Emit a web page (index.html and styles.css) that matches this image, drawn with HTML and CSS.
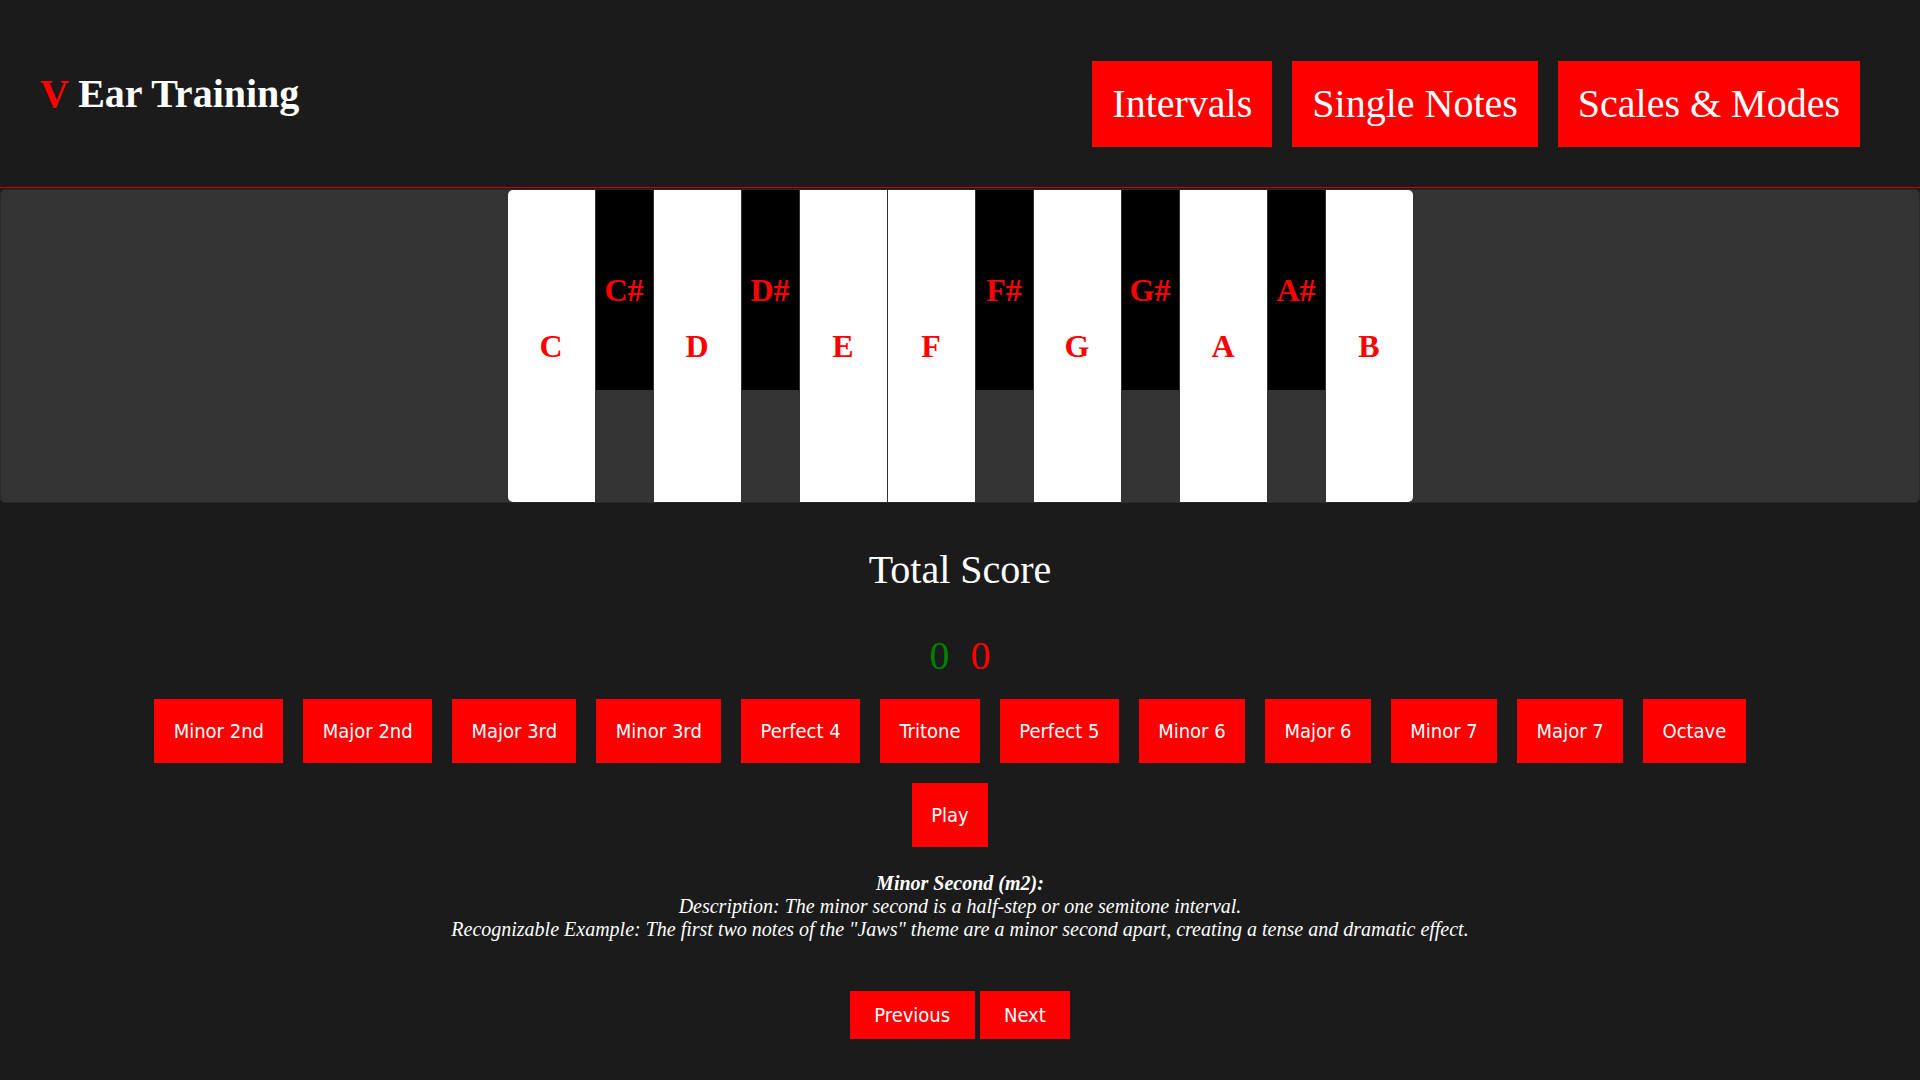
FILE: index.html
```html
<!DOCTYPE html>
<html lang="en">
<head>
<meta charset="utf-8">
<title>V Ear Training</title>
<link rel="stylesheet" href="styles.css">
</head>
<body>
<header class="topbar">
  <h1 class="logo"><span class="logo-v">V</span> Ear Training</h1>
  <nav class="nav">
    <a class="nav-btn" href="#">Intervals</a>
    <a class="nav-btn" href="#">Single Notes</a>
    <a class="nav-btn" href="#">Scales &amp; Modes</a>
  </nav>
</header>

<section class="piano-panel">
  <div class="keyboard">
    <div class="key white first"><span>C</span></div>
    <div class="key black"><span>C#</span></div>
    <div class="key white"><span>D</span></div>
    <div class="key black"><span>D#</span></div>
    <div class="key white"><span>E</span></div>
    <div class="key white"><span>F</span></div>
    <div class="key black"><span>F#</span></div>
    <div class="key white"><span>G</span></div>
    <div class="key black"><span>G#</span></div>
    <div class="key white"><span>A</span></div>
    <div class="key black"><span>A#</span></div>
    <div class="key white last"><span>B</span></div>
  </div>
</section>

<main class="trainer">
  <h2 class="score-title">Total Score</h2>
  <div class="score">
    <span class="score-correct">0</span>
    <span class="score-wrong">0</span>
  </div>

  <div class="interval-row">
    <button class="btn">Minor 2nd</button>
    <button class="btn">Major 2nd</button>
    <button class="btn">Major 3rd</button>
    <button class="btn">Minor 3rd</button>
    <button class="btn">Perfect 4</button>
    <button class="btn">Tritone</button>
    <button class="btn">Perfect 5</button>
    <button class="btn">Minor 6</button>
    <button class="btn">Major 6</button>
    <button class="btn">Minor 7</button>
    <button class="btn">Major 7</button>
    <button class="btn">Octave</button>
  </div>

  <div class="play-row">
    <button class="btn">Play</button>
  </div>

  <div class="description">
    <strong class="desc-title">Minor Second (m2):</strong>
    <span class="desc-line">Description: The minor second is a half-step or one semitone interval.</span>
    <span class="desc-line">Recognizable Example: The first two notes of the "Jaws" theme are a minor second apart, creating a tense and dramatic effect.</span>
  </div>

  <div class="pager">
    <button class="pager-btn">Previous</button>
    <button class="pager-btn">Next</button>
  </div>
</main>
</body>
</html>
```

FILE: styles.css
```css
* {
  box-sizing: border-box;
}

html, body {
  margin: 0;
  padding: 0;
  background: #1b1b1b;
  color: #ffffff;
  font-family: "Liberation Serif", "Times New Roman", serif;
}

body {
  width: 1920px;
  height: 1080px;
  overflow: hidden;
}

/* Header */
.topbar {
  height: 188px;
  display: flex;
  align-items: center;
  justify-content: space-between;
  padding: 0 60px 0 40px;
  border-bottom: 1px solid #d00000;
}

.logo {
  margin: 0;
  font-size: 40px;
  font-weight: bold;
  color: #ffffff;
  line-height: 46px;
}

.logo-v {
  color: #ff0000;
}

.nav {
  display: flex;
  gap: 20px;
  margin-top: 20px;
}

.nav-btn {
  display: block;
  background: #ff0000;
  color: #ffffff;
  text-decoration: none;
  font-size: 40px;
  line-height: 46px;
  padding: 20px;
}

/* Piano */
.piano-panel {
  margin-top: 1px;
  height: 314px;
  background: #333333;
  border: 1px solid #2a2a2a;
  border-radius: 5px;
  display: flex;
  justify-content: center;
}

.keyboard {
  display: flex;
  align-items: flex-start;
  height: 312px;
}

.key {
  display: flex;
  align-items: center;
  justify-content: center;
  color: #ff0000;
  font-weight: bold;
  font-size: 32px;
  border-right: 1px solid #333333;
}

.key.white {
  width: 88px;
  height: 312px;
  background: #ffffff;
}

.key.black {
  width: 58px;
  height: 200px;
  background: #000000;
}

.key.first {
  border-radius: 5px 0 0 5px;
}

.key.last {
  border-radius: 0 5px 5px 0;
  border-right: none;
  width: 87px;
}

/* Trainer */
.trainer {
  display: flex;
  flex-direction: column;
  align-items: center;
}

.score-title {
  margin: 44px 0 0;
  font-size: 40px;
  font-weight: normal;
  line-height: 46px;
}

.score {
  margin-top: 40px;
  display: flex;
  gap: 21px;
  font-size: 40px;
  line-height: 46px;
}

.score-correct {
  color: #008000;
}

.score-wrong {
  color: #ff0000;
}

.interval-row {
  margin-top: 20px;
  display: flex;
  justify-content: center;
  gap: 20px;
  padding-right: 20px;
}

.play-row {
  margin-top: 20px;
  display: flex;
  justify-content: center;
  padding-right: 20px;
}

.btn,
.pager-btn {
  background: #ff0000;
  color: #ffffff;
  border: none;
  border-radius: 0;
  font-family: "DejaVu Sans Condensed", "DejaVu Sans", sans-serif;
  font-stretch: condensed;
  font-size: 20px;
  line-height: 24px;
  padding: 20px 19.4px;
  cursor: pointer;
}

.description {
  margin-top: 25px;
  display: flex;
  flex-direction: column;
  align-items: center;
  font-style: italic;
  font-size: 20px;
  line-height: 23px;
  text-align: center;
}

.desc-title {
  font-weight: bold;
}

.pager {
  margin-top: 50px;
  display: flex;
  gap: 5px;
}

.pager-btn {
  padding: 12px 24.4px;
}
```
